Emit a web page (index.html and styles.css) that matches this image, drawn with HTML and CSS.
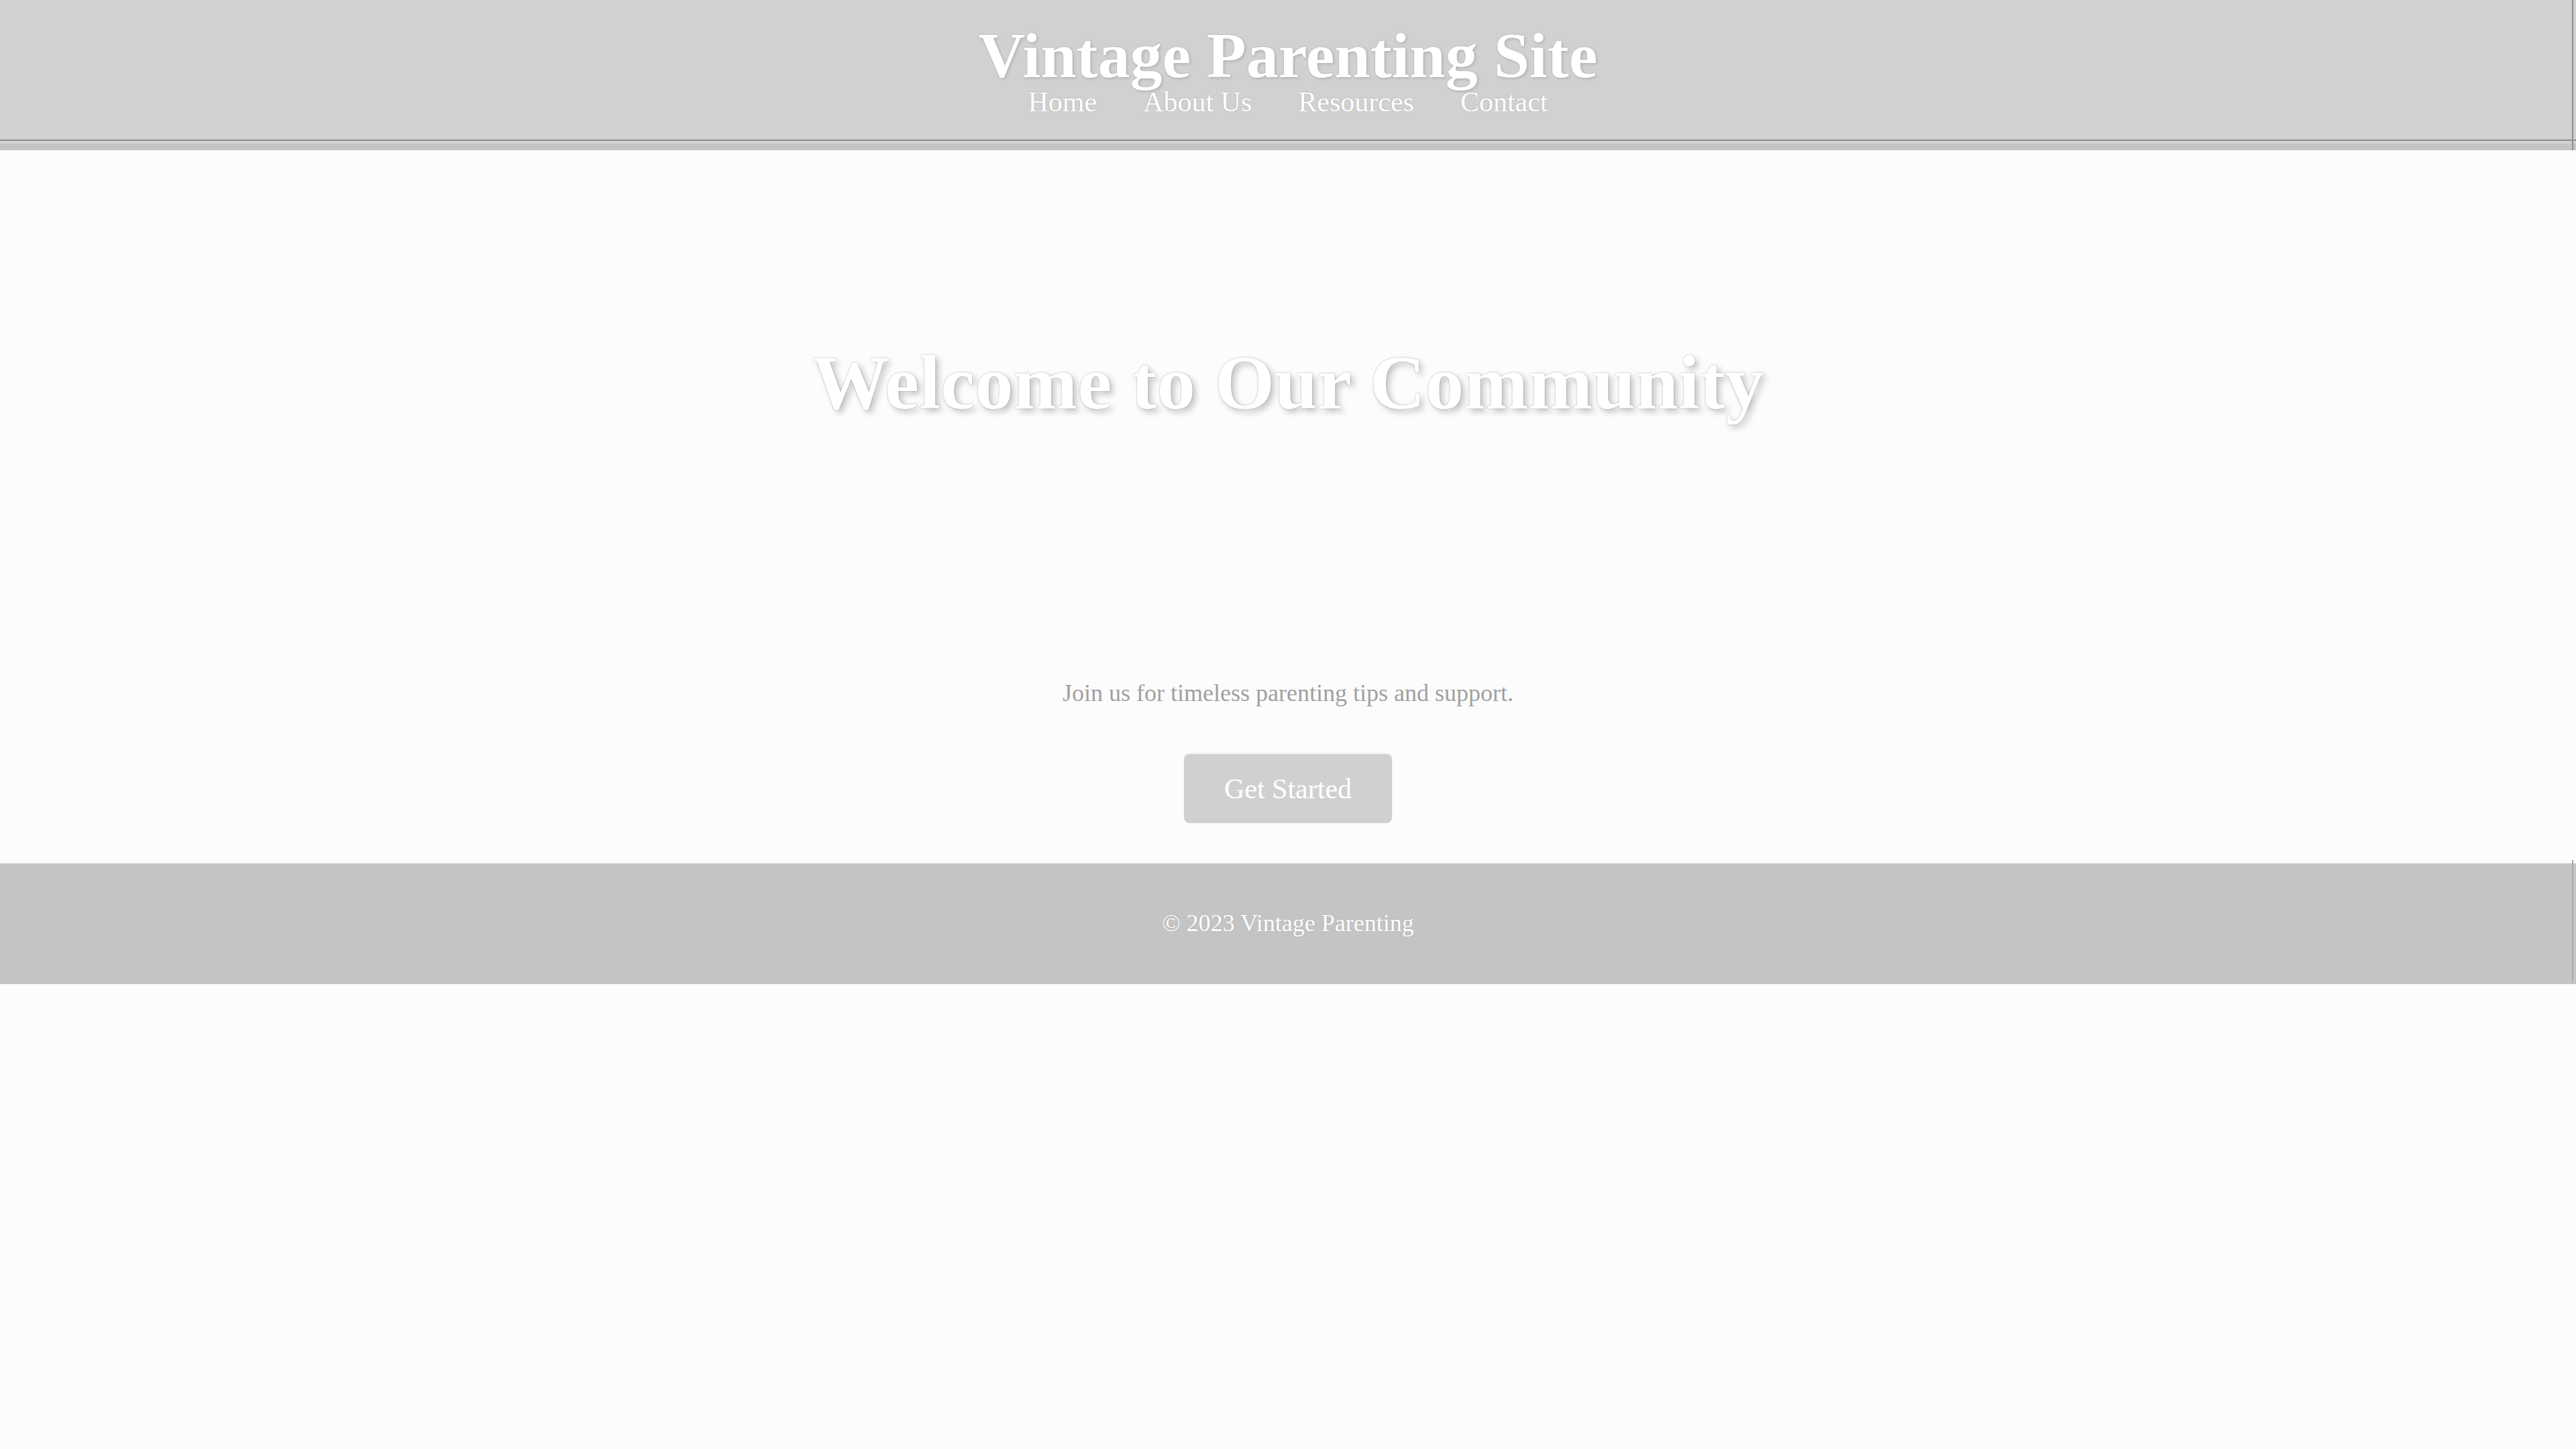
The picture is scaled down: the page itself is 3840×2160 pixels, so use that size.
FILE: index.html
```html
<!DOCTYPE html>
<html lang="en">
<head>
<meta charset="utf-8">
<title>Vintage Parenting Site</title>
<link rel="stylesheet" href="styles.css">
</head>
<body>
<header class="site-header">
  <h1 class="site-title">Vintage Parenting Site</h1>
  <nav class="site-nav">
    <a href="#" class="nav-link">Home</a>
    <a href="#" class="nav-link">About Us</a>
    <a href="#" class="nav-link">Resources</a>
    <a href="#" class="nav-link">Contact</a>
  </nav>
</header>
<div class="header-strip"></div>
<main class="hero">
  <h2 class="hero-title">Welcome to Our Community</h2>
  <p class="hero-text">Join us for timeless parenting tips and support.</p>
  <a href="#" class="hero-button">Get Started</a>
</main>
<footer class="site-footer">
  <p class="footer-text">© 2023 Vintage Parenting</p>
</footer>
</body>
</html>
```

FILE: styles.css
```css
* {
  box-sizing: border-box;
}

html, body {
  margin: 0;
  padding: 0;
}

body {
  background: #fcfcfc;
  font-family: "Liberation Serif", "DejaVu Serif", serif;
  min-height: 2160px;
}

.site-header {
  position: relative;
  background: #d1d1d1;
  border-bottom: 2px solid #8c8c8c;
  padding: 38px 0 0;
  height: 210px;
  display: flex;
  flex-direction: column;
  align-items: center;
}

.site-header::after {
  content: "";
  position: absolute;
  top: 0;
  right: 4px;
  bottom: -16px;
  width: 2px;
  background: #8e8e8e;
}

.site-title {
  margin: 0;
  font-size: 96px;
  line-height: 90px;
  font-weight: 700;
  color: #ffffff;
  text-shadow: 0 0 2px rgba(0, 0, 0, 0.2), 2px 2px 4px rgba(0, 0, 0, 0.12);
}

.site-nav {
  margin-top: 2px;
  display: flex;
  gap: 69px;
}

.nav-link {
  font-size: 42px;
  line-height: 44px;
  color: #ffffff;
  text-decoration: none;
  text-shadow: 0 0 2px rgba(0, 0, 0, 0.2);
}

.header-strip {
  height: 14px;
  border-top: 4px solid #d4d4d4;
  background: #c5c5c5;
}

.hero {
  display: flex;
  flex-direction: column;
  align-items: center;
  padding: 282px 0 60px;
}

.hero-title {
  margin: 0;
  font-size: 115px;
  line-height: 130px;
  font-weight: 700;
  color: #ffffff;
  text-shadow: 0 0 2px rgba(0, 0, 0, 0.35), 5px 5px 10px rgba(0, 0, 0, 0.22);
}

.hero-text {
  margin: 377px 0 0;
  font-size: 36px;
  line-height: 40px;
  color: #a0a0a0;
}

.hero-button {
  margin-top: 71px;
  height: 103px;
  padding: 0 60px;
  display: flex;
  align-items: center;
  background: #d0d0d0;
  border-radius: 8px;
  color: #ffffff;
  font-size: 42px;
  text-decoration: none;
  box-shadow: 0 -2px 4px rgba(0, 0, 0, 0.04);
}

.site-footer {
  position: relative;
  background: #c4c4c4;
  height: 180px;
  padding-top: 69px;
  text-align: center;
}

.site-footer::after {
  content: "";
  position: absolute;
  top: -5px;
  right: 4px;
  height: 180px;
  width: 2px;
  background: #a8a8a8;
}

.footer-text {
  margin: 0;
  font-size: 36px;
  line-height: 40px;
  color: #ffffff;
  text-shadow: 0 0 2px rgba(0, 0, 0, 0.15);
}
```
